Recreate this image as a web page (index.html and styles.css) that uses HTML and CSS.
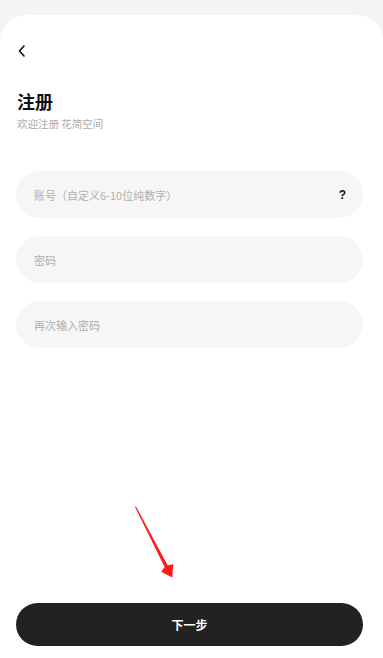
FILE: index.html
```html
<!DOCTYPE html>
<html lang="zh-CN">
<head>
<meta charset="utf-8">
<title>注册</title>
<link rel="stylesheet" href="styles.css">
</head>
<body>
<div class="card">
  <div class="back">
    <svg width="10" height="12" viewBox="0 0 10 12"><path d="M7 1 L2.5 6 L7 11" fill="none" stroke="#111" stroke-width="1.6" stroke-linecap="round" stroke-linejoin="round"/></svg>
  </div>
  <h1 class="title">注册</h1>
  <p class="subtitle">欢迎注册 花简空间</p>
  <div class="fields">
    <div class="field"><span class="ph">账号（自定义6-10位纯数字）</span><span class="help">?</span></div>
    <div class="field"><span class="ph">密码</span></div>
    <div class="field"><span class="ph">再次输入密码</span></div>
  </div>
  <button class="next">下一步</button>
  <svg class="arrow" width="383" height="658" viewBox="0 0 383 658"><polygon points="134.8,506.5 136.2,506.8 167.6,565.2 173.2,564.3 172.3,577.5 161.2,571.8 164.6,567" fill="#ff1a1a"/></svg>
</div>
</body>
</html>
```
FILE: styles.css
```css
* { box-sizing: border-box; }
html, body { margin: 0; padding: 0; }
body {
  background: #f4f4f4;
  font-family: "Noto Sans CJK SC", "Noto Sans", sans-serif;
  width: 383px;
  height: 658px;
  overflow: hidden;
  padding-top: 15px;
}
.card {
  background: #fff;
  border-radius: 26px 26px 0 0;
  height: 643px;
  padding: 30px 20px 12px 16px;
  display: flex;
  flex-direction: column;
}
.back {
  height: 12px;
  padding-left: 1px;
  display: flex;
  align-items: center;
}
.back svg { display: block; }
.title {
  margin: 32px 0 0 1px;
  font-size: 18px;
  line-height: 24px;
  font-weight: 700;
  color: #111;
}
.subtitle {
  margin: 4px 0 0 1px;
  font-size: 10.5px;
  line-height: 14px;
  color: #aaa;
}
.fields {
  margin-top: 40px;
  display: flex;
  flex-direction: column;
  gap: 18px;
}
.field {
  height: 47px;
  border-radius: 24px;
  background: #f6f6f6;
  display: flex;
  align-items: center;
  justify-content: space-between;
  padding: 0 17px 0 18px;
}
.ph {
  font-size: 11px;
  color: #b0b0b0;
}
.help {
  font-family: "Liberation Sans", sans-serif;
  font-weight: 700;
  font-size: 12px;
  color: #111;
}
.next {
  margin-top: auto;
  height: 43px;
  width: 100%;
  border: none;
  border-radius: 22px;
  background: #222;
  color: #fff;
  font-family: "Noto Sans CJK SC", sans-serif;
  font-size: 12px;
  font-weight: 700;
}
.arrow {
  position: absolute;
  left: 0;
  top: 0;
  pointer-events: none;
}
```
